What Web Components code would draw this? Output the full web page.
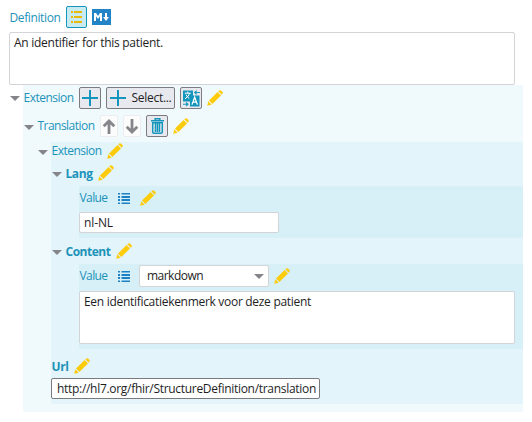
<!DOCTYPE html>
<html lang="en">
<head>
<meta charset="utf-8">
<title>Element properties</title>
<style>
html,body{margin:0;background:#fff}
body{font:12px/16px "Open Sans","Noto Sans",sans-serif;color:#1e1e1e;width:532px;height:422px;overflow:hidden}
</style>
</head>
<body>
<property-editor></property-editor>
<script>
const define = (name, markup, setup) => {
  const template = document.createElement('template');
  template.innerHTML = markup;
  customElements.define(name, class extends HTMLElement {
    connectedCallback() {
      if (this.shadowRoot) return;
      this.attachShadow({mode: 'open'}).append(template.content.cloneNode(true));
      if (setup) setup(this, this.shadowRoot);
    }
  });
};

const pencil = '<path fill="#fccb0b" d="M.2 15.8 1.3 11.3 4.7 14.7ZM2 10.6 10.6 2 14 5.4 5.4 14ZM11.3 1.3 12.2.5Q13.2-.2 14.2.7L15.3 1.8Q16.2 2.8 15.5 3.8L14.7 4.7Z"/>';
const icons = {
  pencil: [16, 16, pencil],
  list: [12, 11, '<path fill="#1d82c5" d="M0 0h2v1.5H0zM3.5 0H12v1.5H3.5zM0 3h2v2H0zM3.5 3H12v2H3.5zM0 6h2v2H0zM3.5 6H12v2H3.5zM0 9.5h2V11H0zM3.5 9.5H12V11H3.5z"/>'],
  options: [11, 12, '<path fill="#e8b90c" d="M0 0h2v2H0zM3 0h8v2H3zM0 5h2v2H0zM3 5h8v2H3zM0 10h2v2H0zM3 10h8v2H3z"/>'],
  plus: [16, 16, '<path fill="#1496bc" d="M7 0h2v7h7v2H9v7H7V9H0V7h7z"/>'],
  markdown: [19, 16, '<path fill="#2383c7" d="M0 0h19v16H0z"/><path fill="#fff" d="M2 12V4h2l2 3 2-3h2v8H8V7.2L6 10 4 7.2V12zM13 4h2v4h2l-3 4-3-4h2z"/>'],
  up: [12, 15, '<path fill="none" stroke="#87878b" stroke-width="2.8" d="M6 15V2M.7 7.3 6 2l5.3 5.3"/>'],
  down: [12, 15, '<path fill="none" stroke="#87878b" stroke-width="2.8" d="M6 0v13M.7 7.7 6 13l5.3-5.3"/>'],
  trash: [13, 16, '<path fill="none" stroke="#1496bc" stroke-width="1.5" d="M0 2.7h13M4.2 2.5V.8h4.6v1.7M1.7 4.7v9.3q0 1.2 1.2 1.2h7.2q1.2 0 1.2-1.2V4.7zM4.5 5v9M6.5 5v9M8.5 5v9"/>'],
  translate: [17, 17, '<path fill="#1496bc" d="M0 .5h10v5h6.5v11H7v-5H0z"/><path fill="none" stroke="#fff" stroke-width="1" d="M1.8 3.2h6M4.8 1.6v1.6M6.6 3.4Q5.6 6.8 2 8.8M3 4.6Q4.2 7 6.2 8.5"/><path fill="none" stroke="#fff" stroke-width="1.3" d="m9 14.6 2.7-7.4 2.7 7.4M9.8 12.2h3.8"/><path fill="none" stroke="#1496bc" stroke-width="1.1" d="M11.7 2.5H17M13.7.7l-2 1.8 2 1.8M0 14.3h5M3 12.5l2 1.8-2 1.8"/>'],
  chevron: [10, 5, '<path fill="#858589" d="M0 0h10L5 5z"/>']
};

define('ui-icon', '<style>:host{display:block;flex:none}svg{display:block;overflow:visible}</style><svg></svg>', (host, root) => {
  const [w, h, art] = icons[host.getAttribute('name')];
  const svg = root.querySelector('svg');
  svg.setAttribute('width', w);
  svg.setAttribute('height', h);
  svg.setAttribute('viewBox', `0 0 ${w} ${h}`);
  svg.innerHTML = art;
});

/* A run of text whose tracking is adjusted to the given width. */
define('ui-text', '<style>:host{display:block;flex:none;white-space:nowrap}:host([bold]){font-weight:700;margin-top:2px}span{display:inline-block}</style><span><slot></slot></span>', host => {
  const w = Number(host.getAttribute('width'));
  const span = host.shadowRoot.querySelector('span');
  const natural = span.getBoundingClientRect().width;
  span.style.letterSpacing = (w - natural) / host.textContent.length + 'px';
  host.style.width = w + 'px';
});

define('ui-button', `<style>
:host{display:flex;flex:none;box-sizing:border-box;width:22px;height:22px;align-items:center;justify-content:center;gap:6px;border:1px solid #7c7c80;border-radius:2px;background:#e8e9ee}
:host([kind=active]){width:21px;border-color:#1496bc;background:#c8eaf1}
:host([kind=quiet]){width:18px;border-color:#ededf0;background:#fcfcfd}
:host([kind=wide]){width:69px}
</style><slot></slot>`);

define('ui-field', `<style>
:host{display:flex;box-sizing:border-box;height:21px;align-items:center;padding:0 5px 0 4px;border:1px solid #d2d4d7;border-radius:2px;background:#fff}
:host([multiline]){height:53px;align-items:flex-start;padding-top:2px}
:host([strong]){border-color:#7a7a7e;padding-left:5px}
:host([select]){height:22px;justify-content:space-between;padding:0 4px 0 7px}
</style><slot></slot>`);

define('ui-row', '<style>:host{display:flex;align-items:center;gap:5px;box-sizing:border-box;color:#1c93b9}::slotted(ui-text){margin-left:-.5px;margin-right:.5px}</style><slot></slot>');

define('value-panel', '<style>:host{display:block;box-sizing:border-box;background:#d7f0f7;margin-left:14px}</style><slot></slot>');

define('tree-node', `<style>
:host{display:grid;grid-template-columns:14px minmax(0,1fr)}
.toggle{display:flex;align-items:center;padding:2px 0 0 .5px;box-sizing:border-box}
.head{padding-left:1px}
.body{grid-column:2}
.tint{grid-column:2;grid-row:1 / span 2;background:var(--tint,transparent)}
.toggle{grid-column:1;grid-row:1}.head{grid-column:2;grid-row:1}.body{grid-row:2}
:host([flat]) .body{grid-column:1 / span 2}
</style>
<div class="tint"></div><div class="toggle"><ui-icon name="chevron"></ui-icon></div>
<div class="head"><slot name="head"></slot></div><div class="body"><slot></slot></div>`);

define('property-editor', `<style>
:host{display:block;padding:0 9px;height:422px;box-sizing:border-box}
.l1{height:327px;width:514px;--tint:#f0fafd;grid-template-rows:25px 1fr}
.l2{--tint:transparent;grid-template-rows:32px 1fr}
.l3{--tint:#e3f4fb;height:262px;grid-template-rows:18px 1fr}
.leaf{--tint:transparent;grid-template-rows:26px auto}
</style>
<ui-row style="height:32px;padding:2px 0 0 1px"><ui-text width="51" style="margin-top:2px">Definition</ui-text><ui-button kind="active"><ui-icon name="options"></ui-icon></ui-button><ui-icon name="markdown"></ui-icon></ui-row>
<ui-field multiline style="width:506px"><ui-text width="149">An identifier for this patient.</ui-text></ui-field>
<tree-node class="l1">
  <ui-row slot="head" style="height:25px;padding-top:1px"><ui-text width="50">Extension</ui-text><ui-button><ui-icon name="plus"></ui-icon></ui-button><ui-button kind="wide"><ui-icon name="plus"></ui-icon><ui-text width="40" style="color:#1e1e1e">Select...</ui-text></ui-button><ui-button><ui-icon name="translate"></ui-icon></ui-button><ui-icon name="pencil"></ui-icon></ui-row>
  <tree-node class="l2" flat>
    <ui-row slot="head" style="height:32px"><ui-text width="57">Translation</ui-text><ui-button kind="quiet"><ui-icon name="up"></ui-icon></ui-button><ui-button kind="quiet"><ui-icon name="down"></ui-icon></ui-button><ui-button><ui-icon name="trash"></ui-icon></ui-button><ui-icon name="pencil"></ui-icon></ui-row>
  </tree-node>
</tree-node>
`, (host, root) => {
  root.querySelector('.l2').insertAdjacentHTML('beforeend', `
  <tree-node class="l3" style="margin-left:14px">
    <ui-row slot="head" style="height:18px"><ui-text width="50">Extension</ui-text><ui-icon name="pencil"></ui-icon></ui-row>
    <tree-node class="leaf">
      <ui-row slot="head" style="height:26px"><ui-text width="27" bold>Lang</ui-text><ui-icon name="pencil"></ui-icon></ui-row>
      <value-panel style="height:52px">
        <ui-row style="height:26px;padding:0 0 2px 1px;gap:10px"><ui-text width="28">Value</ui-text><ui-icon name="list"></ui-icon><ui-icon name="pencil"></ui-icon></ui-row>
        <ui-field style="width:200px"><ui-text width="29">nl-NL</ui-text></ui-field>
      </value-panel>
    </tree-node>
    <tree-node class="leaf">
      <ui-row slot="head" style="height:26px"><ui-text width="45" bold>Content</ui-text><ui-icon name="pencil"></ui-icon></ui-row>
      <value-panel style="height:85px">
        <ui-row style="height:27px;padding:0 0 3px 1px"><ui-text width="28" style="margin-right:5.5px">Value</ui-text><ui-icon name="list"></ui-icon><ui-field select style="width:130px;margin-left:4px"><ui-text width="56" style="color:#1e1e1e">markdown</ui-text><ui-icon name="chevron"></ui-icon></ui-field><ui-icon name="pencil"></ui-icon></ui-row>
        <ui-field multiline style="width:436px"><ui-text width="227">Een identificatiekenmerk voor deze patient</ui-text></ui-field>
      </value-panel>
    </tree-node>
    <ui-row style="height:29px;padding:5px 0 0 1px"><ui-text width="17" bold>Url</ui-text><ui-icon name="pencil"></ui-icon></ui-row>
    <ui-field strong style="width:269px"><ui-text width="259">http://hl7.org/fhir/StructureDefinition/translation</ui-text></ui-field>
  </tree-node>`);
});
</script>
</body>
</html>
